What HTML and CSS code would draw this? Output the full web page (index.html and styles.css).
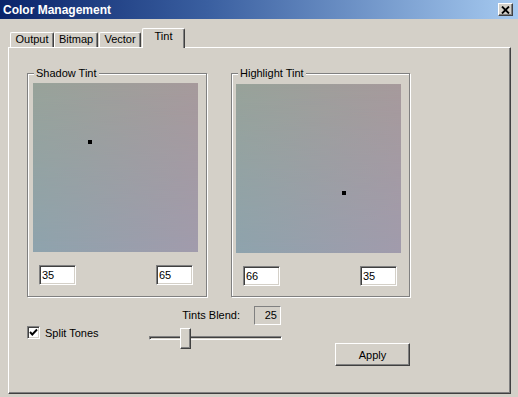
FILE: index.html
```html
<!DOCTYPE html>
<html lang="en">
<head>
    <meta charset="UTF-8">
    <title>Color Management</title>
    <link rel="stylesheet" href="styles.css">
</head>
<body>
    <div class="titlebar">
        <span class="title">Color Management</span>
        <button class="close-btn" aria-label="Close">
            <svg width="9" height="8" viewBox="0 0 9 8">
                <path d="M1 0.5 L8 7.5 M8 0.5 L1 7.5" stroke="#000" stroke-width="1.8"/>
            </svg>
        </button>
    </div>

    <div class="tabs">
        <div class="tab tab-output">Output</div>
        <div class="tab tab-bitmap">Bitmap</div>
        <div class="tab tab-vector">Vector</div>
        <div class="tab tab-tint active">Tint</div>
    </div>

    <div class="panel">
        <div class="groups">
            <div class="group">
                <span class="group-label">Shadow Tint</span>
                <div class="tint-square">
                    <span class="marker" style="left: 55px; top: 57px;"></span>
                </div>
                <div class="inputs">
                    <input class="num" type="text" value="35">
                    <input class="num" type="text" value="65">
                </div>
            </div>
            <div class="group group-right">
                <span class="group-label">Highlight Tint</span>
                <div class="tint-square">
                    <span class="marker" style="left: 106px; top: 107px;"></span>
                </div>
                <div class="inputs">
                    <input class="num" type="text" value="66">
                    <input class="num" type="text" value="35">
                </div>
            </div>
        </div>

        <div class="bottom">
            <label class="split">
                <span class="checkbox">
                    <svg width="11" height="11" viewBox="0 0 11 11">
                        <path d="M2 5 L4.3 7.5 L9 2.5" fill="none" stroke="#000" stroke-width="1.9"/>
                    </svg>
                </span>
                Split Tones
            </label>
            <div class="blend">
                <div class="blend-row">
                    <span>Tints Blend:</span>
                    <span class="blend-value">25</span>
                </div>
                <div class="slider">
                    <span class="thumb" style="margin-left: 31px;"></span>
                </div>
            </div>
            <button class="apply">Apply</button>
        </div>
    </div>
</body>
</html>
```

FILE: styles.css
```css
body {
    margin: 0;
    width: 518px;
    height: 397px;
    background-color: #d4d0c8;
    font-family: "Liberation Sans", Arial, sans-serif;
    font-size: 11px;
    color: #000;
    overflow: hidden;
}
.titlebar {
    height: 19px;
    display: flex;
    align-items: center;
    justify-content: space-between;
    padding: 0 5px 0 3px;
    background: linear-gradient(to right, #0a246a, #3a5fa0 40%, #a6caf0);
}
.title {
    color: #fff;
    font-weight: bold;
    font-size: 12px;
}
.close-btn {
    width: 15px;
    height: 13px;
    padding: 0;
    display: flex;
    align-items: center;
    justify-content: center;
    background-color: #d4d0c8;
    border: 1px solid;
    border-color: #fff #404040 #404040 #fff;
    box-shadow: inset -1px -1px 0 #808080;
}
.tabs {
    height: 28px;
    display: flex;
    align-items: flex-end;
    padding-left: 10px;
}
.tab {
    box-sizing: border-box;
    height: 15px;
    line-height: 13px;
    text-align: center;
    border-top: 1px solid #fff;
    border-left: 1px solid #fff;
    border-right: 1px solid #404040;
    border-radius: 2px 2px 0 0;
    box-shadow: inset -1px 0 0 #808080;
}
.tab-output { width: 44px; }
.tab-bitmap { width: 44px; }
.tab-vector { width: 42px; margin-left: 1px; }
.tab-tint { width: 43px; margin-left: 1px; }
.tab.active {
    height: 20px;
    line-height: 15px;
    margin-bottom: -1px;
    position: relative;
    z-index: 1;
    background-color: #d4d0c8;
}
.panel {
    box-sizing: border-box;
    margin-left: 8px;
    width: 503px;
    height: 347px;
    border: 1px solid;
    border-color: #fff #404040 #404040 #fff;
    box-shadow: inset -1px -1px 0 #808080;
}
.groups {
    display: flex;
    gap: 24px;
    margin: 25px 0 0 18px;
}
.group {
    position: relative;
    box-sizing: border-box;
    width: 180px;
    padding: 9px 5px 11px 5px;
    border: 1px solid #808080;
    box-shadow: inset 1px 1px 0 #fff, 1px 1px 0 #fff;
}
.group-right {
    width: 179px;
    padding-left: 4px;
    padding-top: 10px;
    padding-bottom: 10px;
}
.group-label {
    position: absolute;
    top: -8px;
    left: 6px;
    padding: 0 2px 0 2px;
    background-color: #d4d0c8;
    line-height: 14px;
}
.tint-square {
    position: relative;
    width: 165px;
    height: 169px;
    background: linear-gradient(to right, #98a39a, #a79a9c);
}
.tint-square::before {
    content: "";
    position: absolute;
    inset: 0;
    background: linear-gradient(to right, #8ea3ad, #a19bac);
    -webkit-mask-image: linear-gradient(to bottom, transparent, #000);
    mask-image: linear-gradient(to bottom, transparent, #000);
}
.marker {
    position: absolute;
    width: 4px;
    height: 4px;
    background-color: #000;
}
.inputs {
    display: flex;
    justify-content: space-between;
    margin-top: 13px;
    padding: 0 8px 0 6px;
}
.group-right .inputs {
    padding: 0 7px 0 7px;
}
.num {
    box-sizing: border-box;
    width: 37px;
    height: 20px;
    padding: 0 0 0 2px;
    font-family: inherit;
    font-size: 11px;
    background-color: #fff;
    border: 1px solid;
    border-color: #808080 #fff #fff #808080;
    box-shadow: inset 1px 1px 0 #404040, inset -1px -1px 0 #d4d0c8;
    outline: none;
}
.bottom {
    display: flex;
    align-items: flex-start;
    margin-top: 8px;
}
.split {
    display: flex;
    align-items: center;
    gap: 5px;
    width: 122px;
    margin: 21px 0 0 18px;
}
.checkbox {
    box-sizing: border-box;
    width: 13px;
    height: 13px;
    display: flex;
    align-items: center;
    justify-content: center;
    background-color: #fff;
    border: 1px solid;
    border-color: #808080 #fff #fff #808080;
    box-shadow: inset 1px 1px 0 #404040, inset -1px -1px 0 #d4d0c8;
}
.blend {
    width: 133px;
}
.blend-row {
    display: flex;
    align-items: center;
    justify-content: flex-end;
    gap: 14px;
    height: 20px;
    padding-right: 1px;
}
.blend-value {
    box-sizing: border-box;
    width: 27px;
    height: 19px;
    line-height: 17px;
    text-align: right;
    padding-right: 3px;
    border: 1px solid;
    border-color: #808080 #fff #fff #808080;
}
.slider {
    position: relative;
    display: flex;
    height: 21px;
    margin-top: 3px;
}
.slider::before {
    content: "";
    position: absolute;
    left: 0;
    right: 0;
    top: 8px;
    height: 2px;
    border-top: 1px solid #808080;
    border-left: 1px solid #808080;
    border-bottom: 1px solid #fff;
    border-right: 1px solid #fff;
    box-shadow: inset 1px 1px 0 #404040;
}
.thumb {
    position: relative;
    box-sizing: border-box;
    width: 11px;
    height: 21px;
    background-color: #d4d0c8;
    border: 1px solid;
    border-color: #fff #404040 #404040 #fff;
    box-shadow: inset -1px -1px 0 #808080;
}
.apply {
    box-sizing: border-box;
    width: 75px;
    height: 23px;
    margin: 38px 0 0 53px;
    padding: 0;
    font-family: inherit;
    font-size: 11px;
    background-color: #d4d0c8;
    border: 1px solid;
    border-color: #fff #404040 #404040 #fff;
    box-shadow: inset -1px -1px 0 #808080;
}
```
